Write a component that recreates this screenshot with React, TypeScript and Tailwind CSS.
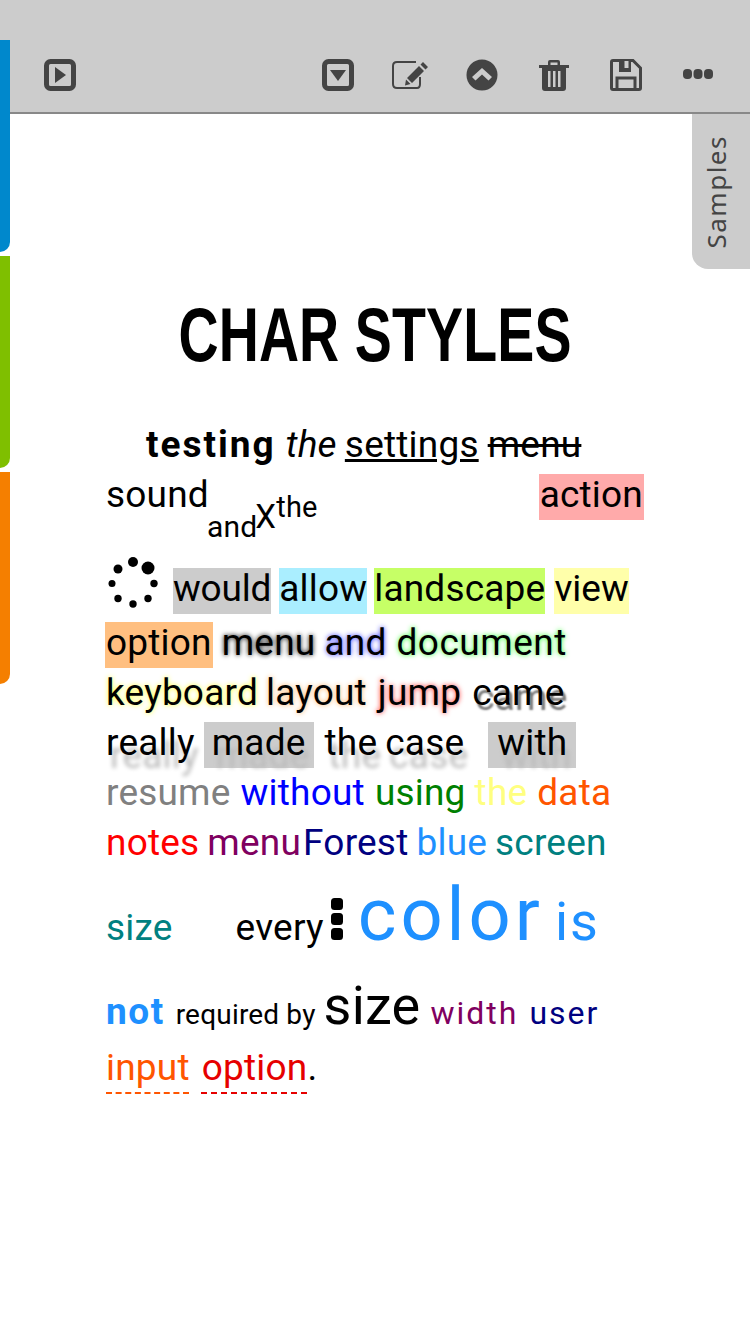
import type { ReactNode } from "react";

const rowClass = "h-[50px] whitespace-nowrap leading-[42px]";

function Mark({ bg, ml, children }: { bg: string; ml: string; children: ReactNode }) {
  return <span className={`inline-block h-[46px] ${bg} ${ml}`}>{children}</span>;
}

function PlayBoxIcon() {
  return (
    <svg width="32" height="32" viewBox="0 0 32 32">
      <rect x="2.5" y="2.5" width="27" height="27" rx="4" fill="none" stroke="#444" strokeWidth="5" />
      <path d="M11 8 L22 16 L11 24 Z" fill="#444" />
    </svg>
  );
}

function DownBoxIcon() {
  return (
    <svg width="32" height="32" viewBox="0 0 32 32">
      <rect x="2.5" y="2.5" width="27" height="27" rx="4" fill="none" stroke="#444" strokeWidth="5" />
      <path d="M8 11 L24 11 L16 22 Z" fill="#444" />
    </svg>
  );
}

function EditIcon() {
  return (
    <svg width="36" height="30" viewBox="0 0 36 30">
      <path d="M24 2 H5 Q1 2 1 6 V24 Q1 28 5 28 H25 Q28 28 28 24 V17" fill="none" stroke="#444" strokeWidth="2" />
      <path d="M31 2 L36 7 L33.5 9.5 L28.5 4.5 Z M27 6 L32 11 L20 23 L15 18 Z M14 19.5 L18.5 24 L13 25.5 Z" fill="#444" />
    </svg>
  );
}

function UpCircleIcon() {
  return (
    <svg width="32" height="32" viewBox="0 0 32 32">
      <circle cx="16" cy="16" r="15.5" fill="#444" />
      <path d="M6 18 L16 9 L26 18 L22.5 21.5 L16 15.5 L9.5 21.5 Z" fill="#ccc" />
    </svg>
  );
}

function TrashIcon() {
  return (
    <svg width="30" height="32" viewBox="0 0 30 32">
      <path d="M0 6 H30 V9 H0 Z M9 6 V3 Q9 1 11 1 H19 Q21 1 21 3 V6 H18.5 V3.5 H11.5 V6 Z" fill="#444" />
      <path fillRule="evenodd" d="M3 9 H27 V29 Q27 32 24 32 H6 Q3 32 3 29 Z M9 12 V28 H11.5 V12 Z M14 12 V28 H16.5 V12 Z M19 12 V28 H21.5 V12 Z" fill="#444" />
    </svg>
  );
}

function SaveIcon() {
  return (
    <svg width="32" height="32" viewBox="0 0 32 32">
      <path d="M1.5 3 Q1.5 1.5 3 1.5 H23 L30.5 9 V29 Q30.5 30.5 29 30.5 H3 Q1.5 30.5 1.5 29 Z" fill="none" stroke="#444" strokeWidth="3" />
      <path d="M9 2 H21 V13 H9 Z" fill="#444" />
      <path d="M14.5 2 H18.5 V9 H14.5 Z" fill="#ccc" />
      <path d="M7 30 V19 H25 V30" fill="none" stroke="#444" strokeWidth="3" />
    </svg>
  );
}

function DotsIcon() {
  return (
    <svg width="30" height="10" viewBox="0 0 30 10">
      <rect x="0" y="0" width="9" height="10" rx="4" fill="#444" />
      <rect x="10.5" y="0" width="9" height="10" rx="4" fill="#444" />
      <rect x="21" y="0" width="9" height="10" rx="4" fill="#444" />
    </svg>
  );
}

function Spinner() {
  return (
    <svg width="52" height="52" viewBox="0 0 52 52" className="inline-block align-baseline">
      <circle cx="26" cy="6" r="5" />
      <circle cx="41" cy="12" r="6.5" />
      <circle cx="47" cy="27.5" r="3.7" />
      <circle cx="41" cy="42.5" r="3.7" />
      <circle cx="26" cy="48" r="3.7" />
      <circle cx="11" cy="42.5" r="3.7" />
      <circle cx="5" cy="27.5" r="3.5" />
      <circle cx="11" cy="13" r="4.5" />
    </svg>
  );
}

function BlockDots() {
  return (
    <svg width="12" height="42" viewBox="0 0 12 42" className="ml-[7px] mr-[15px] inline-block align-baseline">
      <rect y="0" width="12" height="12" rx="3.5" />
      <rect y="15" width="12" height="12" rx="3.5" />
      <rect y="30" width="12" height="12" rx="3.5" />
    </svg>
  );
}

export default function App() {
  return (
    <div className="relative h-[1334px] w-[750px] overflow-hidden bg-white font-['Roboto',sans-serif] text-[37px] tracking-[0.2px] text-black">
      {/* toolbar */}
      <div className="flex h-[114px] items-center border-b-2 border-[#888] bg-[#ccc] pl-[44px] pr-[16px] pt-[38px]">
        <PlayBoxIcon />
        <div className="ml-auto flex items-center">
          <div className="flex w-[72px] justify-center"><DownBoxIcon /></div>
          <div className="flex w-[72px] justify-center"><EditIcon /></div>
          <div className="flex w-[72px] justify-center"><UpCircleIcon /></div>
          <div className="flex w-[72px] justify-center"><TrashIcon /></div>
          <div className="flex w-[72px] justify-center"><SaveIcon /></div>
          <div className="mb-[2px] flex w-[72px] justify-center"><DotsIcon /></div>
        </div>
      </div>

      {/* side tabs */}
      <div className="absolute left-0 top-[40px] h-[212px] w-[10px] rounded-br-[10px] bg-[#0088cc]" />
      <div className="absolute left-0 top-[256px] h-[212px] w-[10px] rounded-br-[10px] bg-[#7fbf00]" />
      <div className="absolute left-0 top-[472px] h-[212px] w-[10px] rounded-br-[10px] bg-[#f57f00]" />
      <div className="absolute right-0 top-[114px] flex h-[155px] w-[58px] items-center justify-center rounded-bl-[16px] bg-[#ccc] pr-[10px]">
        <span className="rotate-180 font-['Noto_Sans',sans-serif] text-[26px] tracking-[1.5px] text-[#444] [writing-mode:vertical-rl]">Samples</span>
      </div>

      {/* title */}
      <h1 className="mt-[186px] h-[124px] scale-x-[0.73] text-center font-['Liberation_Sans',sans-serif] text-[76px] font-bold leading-[70px]">CHAR STYLES</h1>

      <div className="pl-[106px]">
        <div className={rowClass}>
          <b className="ml-[40px] tracking-[2px]">testing</b>
          <i className="ml-[10px]">the</i>
          <u className="ml-[8px]">settings</u>
          <s className="ml-[9px]">menu</s>
        </div>
        <div className="h-[94px] whitespace-nowrap leading-[42px]">
          <span>sound</span>
          <span className="ml-[-2px] align-[-30px] text-[30px] leading-[0]">and</span>
          <span className="ml-[-2px] align-[-21px] text-[33px] leading-[0]">X</span>
          <span className="align-[-10px] text-[29px] leading-[0]">the</span>
          <Mark bg="bg-[#ffaaaa]" ml="ml-[221px] px-[1px]">action</Mark>
        </div>
        <div className="relative h-[54px] whitespace-nowrap pl-[67px] leading-[42px]">
          <span className="absolute left-[1px] top-[-12px]"><Spinner /></span>
          <Mark bg="bg-[#ccc] tracking-[-0.2px]" ml="">would</Mark>
          <Mark bg="bg-[#aaeeff]" ml="ml-[8px]">allow</Mark>
          <Mark bg="bg-[#c6ff66]" ml="ml-[7px]">landscape</Mark>
          <Mark bg="bg-[#ffffaa] tracking-[0px]" ml="ml-[9px]">view</Mark>
        </div>
        <div className={rowClass}>
          <Mark bg="bg-[#ffbf80]" ml="ml-[-1px] px-[1px]">option</Mark>
          <span className="ml-[9px] [text-shadow:0_0_5px_#000]">menu</span>
          <span className="ml-[9px] [text-shadow:0_0_5px_#3333ff]">and</span>
          <span className="ml-[10px] tracking-[0.5px] [text-shadow:0_0_5px_#33ff33]">document</span>
        </div>
        <div className={rowClass}>
          <span className="[text-shadow:0_0_5px_#ffff33]">keyboard</span>
          <span className="ml-[8px] [text-shadow:0_0_5px_#ffb366]">layout</span>
          <span className="ml-[11px] [text-shadow:0_0_5px_#ff3333]">jump</span>
          <span className="ml-[11px] [text-shadow:3px_5px_2px_#777]">came</span>
        </div>
        <div className={rowClass}>
          <span className="[text-shadow:4px_13px_4px_#bbb]">really</span>
          <Mark bg="bg-[#ccc]" ml="ml-[9px] px-[8px] [text-shadow:4px_13px_4px_#bbb]">made</Mark>
          <span className="ml-[11px] [text-shadow:4px_13px_4px_#bbb]">the</span>
          <span className="ml-[8px] [text-shadow:4px_13px_4px_#bbb]">case</span>
          <Mark bg="bg-[#ccc]" ml="ml-[24px] px-[9px] [text-shadow:4px_13px_4px_#bbb]">with</Mark>
        </div>
        <div className={rowClass}>
          <span className="text-[#808080]">resume</span>
          <span className="ml-[10px] text-[#0000ff]">without</span>
          <span className="ml-[10px] text-[#008000]">using</span>
          <span className="ml-[9px] text-[#ffff80]">the</span>
          <span className="ml-[10px] text-[#ff5500]">data</span>
        </div>
        <div className="h-[76px] whitespace-nowrap leading-[42px]">
          <span className="text-[#ff0000]">notes</span>
          <span className="ml-[8px] text-[#800060]">menu</span>
          <span className="ml-[2px] text-[#000080]">Forest</span>
          <span className="ml-[8px] text-[#1e90ff]">blue</span>
          <span className="ml-[8px] text-[#008080]">screen</span>
        </div>
        <div className="h-[93px] whitespace-nowrap leading-[42px]">
          <span className="text-[#008080]">size</span>
          <span className="ml-[63px]">every</span>
          <BlockDots />
          <span className="text-[74px] leading-[0] tracking-[4px] text-[#1e90ff]">color</span>
          <span className="ml-[11px] text-[54px] leading-[0] tracking-[2px] text-[#1e90ff]">is</span>
        </div>
        <div className="h-[56px] whitespace-nowrap leading-[42px]">
          <b className="tracking-[1.5px] text-[#1e90ff]">not</b>
          <span className="ml-[11px] text-[28px]">required</span>
          <span className="ml-[7px] text-[28px]">by</span>
          <span className="ml-[8px] text-[54px] leading-[0]">size</span>
          <span className="ml-[10px] text-[32px] tracking-[2px] text-[#800060]">width</span>
          <span className="ml-[11px] text-[32px] tracking-[2px] text-[#000080]">user</span>
        </div>
        <div className={rowClass}>
          <span className="text-[#ff5500] underline decoration-dashed decoration-2 underline-offset-[12px]">input</span>
          <span className="ml-[12px] text-[#e60000] underline decoration-dashed decoration-2 underline-offset-[12px]">option</span>
          <span>.</span>
        </div>
      </div>
    </div>
  );
}
